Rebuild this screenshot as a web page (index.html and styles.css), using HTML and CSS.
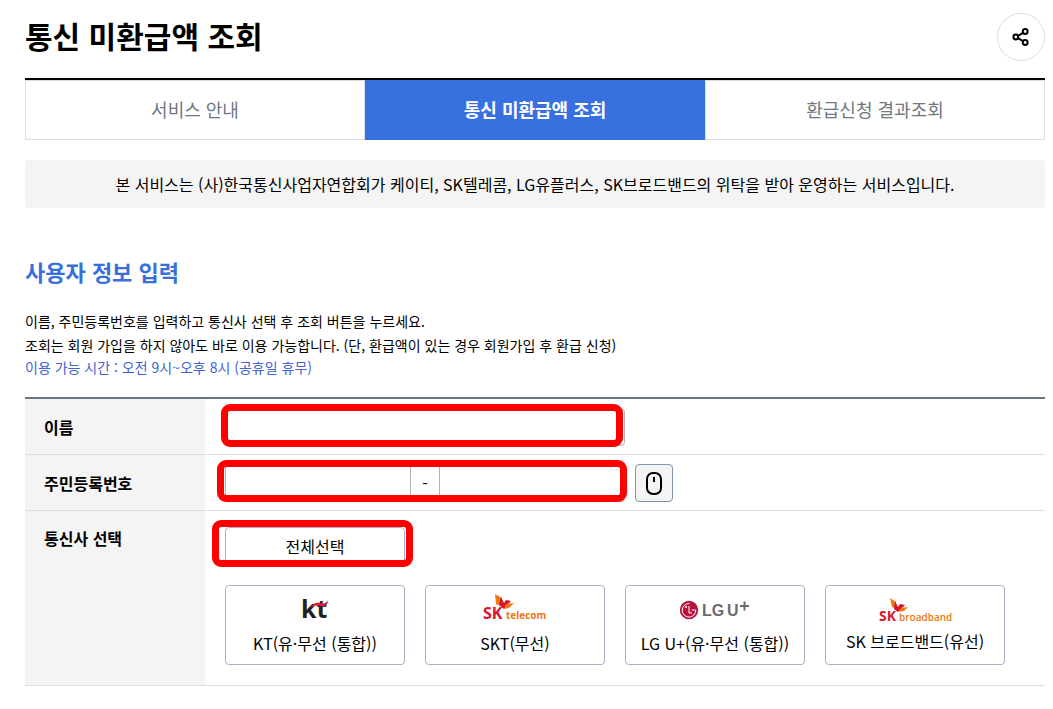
FILE: index.html
```html
<!DOCTYPE html>
<html lang="ko">
<head>
<meta charset="utf-8">
<meta name="viewport" content="width=device-width, initial-scale=1">
<title>통신 미환급액 조회</title>
<link rel="stylesheet" href="styles.css">
</head>
<body>
<main class="page">
  <header class="page-head">
    <h1 class="page-title">통신 미환급액 조회</h1>
    <button class="share" type="button" aria-label="공유">
      <svg width="18" height="20" viewBox="0 0 18 20" fill="none" stroke="currentColor" stroke-width="2">
        <path d="M6 8.800 11 5.800M6 11.200 11 14.200"/>
        <circle cx="3.800" cy="10" r="2.400"/><circle cx="13.200" cy="4.500" r="2.400"/><circle cx="13.200" cy="15.500" r="2.400"/>
      </svg>
    </button>
  </header>

  <nav class="tabs">
    <a class="tab" href="#guide">서비스 안내</a>
    <a class="tab tab-active" href="#search" aria-current="page">통신 미환급액 조회</a>
    <a class="tab" href="#result">환급신청 결과조회</a>
  </nav>

  <p class="notice">본 서비스는 (사)한국통신사업자연합회가 케이티, SK텔레콤, LG유플러스, SK브로드밴드의 위탁을 받아 운영하는 서비스입니다.</p>

  <h2 class="section-title">사용자 정보 입력</h2>
  <div class="desc">
    <p class="desc-line">이름, 주민등록번호를 입력하고 통신사 선택 후 조회 버튼을 누르세요.</p>
    <p class="desc-line">조회는 회원 가입을 하지 않아도 바로 이용 가능합니다. (단, 환급액이 있는 경우 회원가입 후 환급 신청)</p>
    <p class="desc-hours">이용 가능 시간 : 오전 9시~오후 8시 (공휴일 휴무)</p>
  </div>

  <form>
    <table class="form">
      <tr>
        <th scope="row"><label for="name">이름</label></th>
        <td>
          <div class="field marked mark-name"><input class="box" id="name" type="text"></div>
        </td>
      </tr>
      <tr>
        <th scope="row"><label for="rrn1">주민등록번호</label></th>
        <td>
          <div class="field-row">
            <div class="field rrn marked mark-rrn">
              <input class="rrn-part" id="rrn1" type="text" inputmode="numeric">
              <span class="dash">-</span>
              <input class="rrn-part" type="password" aria-label="주민등록번호 뒷자리">
            </div>
            <button class="mouse" type="button" aria-label="마우스 입력">
              <svg width="20" height="26" viewBox="0 0 20 26" fill="none" stroke="currentColor" stroke-width="2">
                <rect x="3" y="3" width="14" height="21" rx="6"/><path d="M10 7v5"/>
              </svg>
            </button>
          </div>
        </td>
      </tr>
      <tr>
        <th class="th-top" scope="row">통신사 선택</th>
        <td class="td-carriers">
          <div class="select-all marked mark-all"><button class="all" type="button">전체선택</button></div>
          <div class="carriers">
            <button class="carrier" type="button">
              <svg class="logo" viewBox="0 0 120 32">
                <text class="kt" x="46" y="27">kt</text>
                <path fill="#e3192d" d="M54 17c4-5 8-6 11-5s6 0 8-2c0 4-4 6-8 5-5-1-7 0-11 2z"/>
              </svg>
              <span>KT(유·무선 (통합))</span>
            </button>
            <button class="carrier" type="button">
              <svg class="logo" viewBox="0 0 120 32">
                <path fill="#ee7816" d="M40 3l7 4-1 8-5-2z"/>
                <path fill="#d9142b" d="M46 6l3 6 2-3 5 1-4 4-3 4-5-4z"/>
                <path fill="#ee7816" d="M51 13l8-1-5 5-5 1z"/>
                <text class="sk" x="28" y="28">SK</text>
                <text class="sk-sub" x="51" y="28">telecom</text>
              </svg>
              <span>SKT(무선)</span>
            </button>
            <button class="carrier" type="button">
              <svg class="logo" viewBox="0 0 120 32">
                <circle cx="34" cy="19" r="9.200" fill="#b9123f"/>
                <path fill="none" stroke="#fff" d="M34.500 12.500a6.800 6.800 0 1 0 6.300 6.500h-4M34 15v7h3"/>
                <circle cx="31" cy="16" r="1" fill="#fff"/>
                <text class="lg" x="47" y="25">LG</text>
                <text class="lg" x="72" y="25">U</text>
                <path fill="none" stroke="#6b6c6e" stroke-width="2" d="M85 15h9M89.500 10.500v9"/>
              </svg>
              <span>LG U+(유·무선 (통합))</span>
            </button>
            <button class="carrier carrier-up" type="button">
              <svg class="logo" viewBox="0 0 120 32">
                <g transform="translate(-4 4)">
                  <path fill="#ee7816" d="M39 3l6 4v7l-4-2z"/>
                  <path fill="#d9142b" d="M44 6l3 6 2-3 5 1-4 4-3 3-4-3z"/>
                  <path fill="#ee7816" d="M50 13l7-1-4 4-6 1z"/>
                </g>
                <text class="sk sk-small" x="24" y="30">SK</text>
                <text class="sk-sub sk-wide" x="44" y="30">broadband</text>
              </svg>
              <span>SK 브로드밴드(유선)</span>
            </button>
          </div>
        </td>
      </tr>
    </table>
  </form>
</main>
</body>
</html>
```
FILE: styles.css
```css
* { box-sizing: border-box; }
body {
  margin: 0;
  background: #fff;
  color: #000;
  font-family: "Noto Sans CJK KR", sans-serif;
  font-size: 16px;
}
h1, h2, p { margin: 0; }
button, input { font: inherit; color: inherit; margin: 0; padding: 0; }
button { cursor: pointer; }

.page { padding: 13px 8px 20px 25px; }
.page-head {
  display: flex;
  justify-content: space-between;
  align-items: flex-start;
  margin-bottom: 17px;
}
.page-title { font-size: 30px; line-height: 44px; font-weight: 700; }
.share {
  display: flex;
  align-items: center;
  justify-content: center;
  width: 48px;
  height: 48px;
  border: 1px solid #d6dde5;
  border-radius: 50%;
  background: #fff;
}

.tabs {
  display: grid;
  grid-template-columns: repeat(3, 1fr);
  border-top: 2px solid #000;
  margin-bottom: 20px;
}
.tab {
  padding-bottom: 2px;
  border: 1px solid #d8dee6;
  font-size: 18px;
  line-height: 56px;
  text-align: center;
  text-decoration: none;
  color: #70777f;
}
.tab-active {
  border-color: #3871df;
  background: #3871df;
  color: #fff;
  font-weight: 700;
}

.notice {
  padding: 12px 20px;
  margin-bottom: 48px;
  border-radius: 4px;
  background: #f4f4f4;
  line-height: 24px;
  text-align: center;
}

.section-title {
  margin-bottom: 23px;
  font-size: 22px;
  line-height: 30px;
  font-weight: 700;
  color: #386fd9;
}
.desc { margin-bottom: 20px; font-size: 14px; }
.desc-line { line-height: 24px; }
.desc-hours { line-height: 20px; color: #4263cf; }

.form {
  width: 100%;
  border-collapse: separate;
  border-spacing: 0;
  border-top: 2px solid #6c7683;
}
.form th, .form td { border-bottom: 1px solid #dbdfe7; text-align: left; }
.form th {
  width: 180px;
  padding: 0 19px;
  background: #f4f4f4;
  font-weight: 700;
}
.form td { padding: 9px 0 8px 20px; }
.form .th-top { padding-top: 15px; line-height: 24px; vertical-align: top; }
.form .td-carriers { padding: 16px 0 20px 20px; }

.field { width: 400px; height: 38px; }
.box {
  display: block;
  width: 100%;
  height: 100%;
  padding: 0 10px;
  border: 1px solid #a9b3c1;
  border-radius: 4px;
}
.field-row { display: flex; gap: 10px; }
.rrn {
  display: grid;
  grid-template-columns: 1fr 30px 1fr;
  border: 1px solid #a9b3c1;
  border-radius: 4px;
}
.rrn-part { min-width: 0; padding: 0 10px; border: 0; background: transparent; }
.dash {
  border: solid #a9b3c1;
  border-width: 0 1px;
  line-height: 36px;
  text-align: center;
}
.mouse {
  display: flex;
  align-items: center;
  justify-content: center;
  width: 38px;
  height: 38px;
  border: 1px solid #8595a9;
  border-radius: 4px;
  background: #f4f4f4;
}

/* highlight frames drawn over the required fields */
.marked { position: relative; }
.marked::after {
  content: "";
  position: absolute;
  border: 7px solid #f00;
  border-radius: 9px;
  pointer-events: none;
}
.mark-name::after { inset: -4px 2px -1px -4px; }
.mark-rrn::after { inset: -5px -3px -1px -9px; }
.mark-all::after { inset: -7px -8px -2px -13px; }

.select-all { width: 180px; height: 38px; margin-bottom: 20px; }
.all {
  width: 100%;
  height: 100%;
  border: 1px solid #a9b3c5;
  border-radius: 4px;
  background: #fff;
}
.carriers { display: flex; flex-wrap: wrap; gap: 20px; }
.carrier {
  display: flex;
  flex-direction: column;
  align-items: center;
  width: 180px;
  height: 80px;
  padding-top: 5px;
  border: 1px solid #a9b3c5;
  border-radius: 4px;
  background: #fff;
  line-height: 24px;
  gap: 8px;
}
.carrier-up { gap: 6px; }
.logo { width: 120px; height: 32px; flex: none; overflow: visible; }
.logo text { font-family: "Open Sans", sans-serif; font-weight: 700; }
.logo .kt { font-size: 25px; font-weight: 700; fill: #231f20; }
.logo .sk { font-size: 16px; fill: #d9142b; }
.logo .sk-small { font-size: 14px; }
.logo .sk-sub { font-size: 10px; fill: #ee7816; }
.logo .sk-wide { font-weight: 600; }
.logo .lg { font-family: "Liberation Sans", sans-serif; font-size: 16px; fill: #6b6c6e; }
```
